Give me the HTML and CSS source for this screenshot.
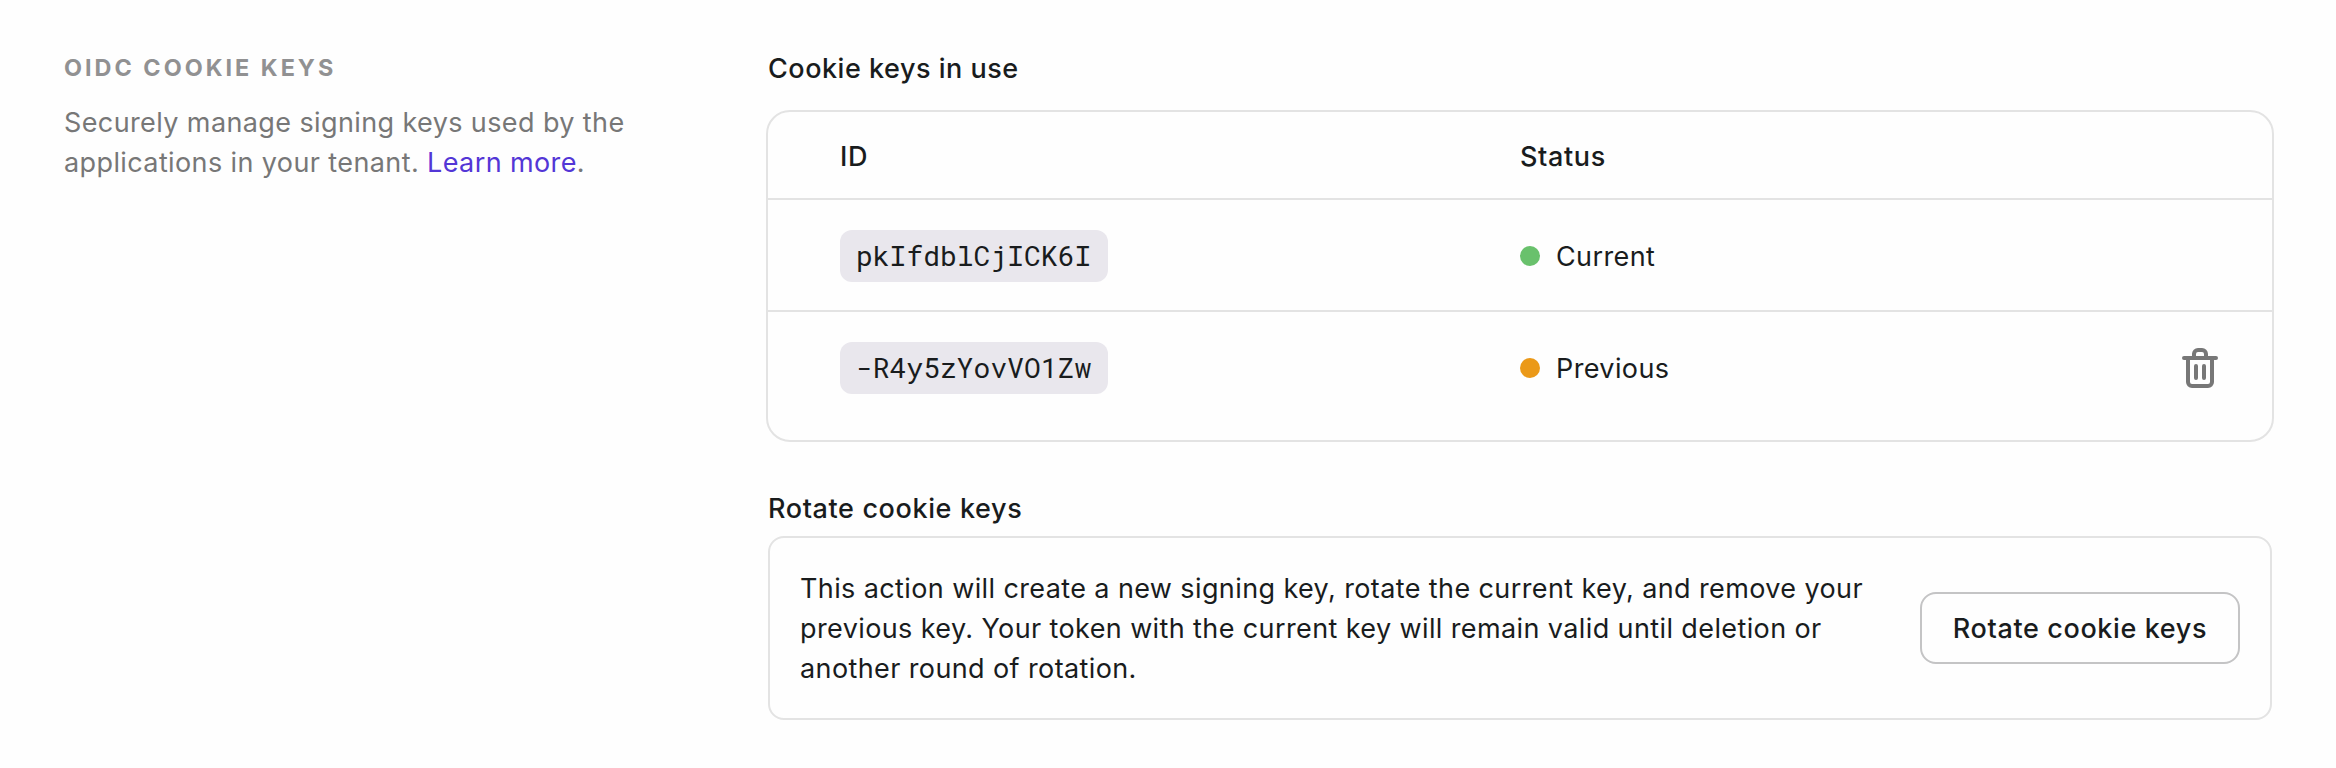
FILE: index.html
```html
<!DOCTYPE html>
<html lang="en">
<head>
<meta charset="utf-8">
<title>OIDC cookie keys</title>
<link rel="stylesheet" href="styles.css">
</head>
<body>
<main class="form-card">
  <section class="intro">
    <h2 class="intro-title">OIDC COOKIE KEYS</h2>
    <p class="intro-text">Securely manage signing keys used by the<br>applications in your tenant. <a class="link" href="#">Learn more</a>.</p>
  </section>
  <section class="fields">
    <h3 class="label label-use">Cookie keys in use</h3>
    <div class="table">
      <div class="row head"><div>ID</div><div>Status</div><div></div></div>
      <div class="row">
        <div><code class="chip">pkIfdblCjICK6I</code></div>
        <div class="status"><i class="dot current"></i><span class="status-text">Current</span></div>
        <div></div>
      </div>
      <div class="row">
        <div><code class="chip">-R4y5zYovVO1Zw</code></div>
        <div class="status"><i class="dot previous"></i><span class="status-text">Previous</span></div>
        <button class="delete" aria-label="Delete">
          <svg width="48" height="48" viewBox="0 0 48 48" fill="none" stroke="#777777" stroke-width="4" stroke-linecap="round" stroke-linejoin="round">
            <path d="M8 14H40M18 14V10a4 4 0 0 1 4-4h4a4 4 0 0 1 4 4v4M12 14V38a4 4 0 0 0 4 4H32a4 4 0 0 0 4-4V14M20 22V34M28 22V34"/>
          </svg>
        </button>
      </div>
    </div>
    <h3 class="label label-rotate">Rotate cookie keys</h3>
    <div class="rotate">
      <p class="rotate-text">This action will create a new signing key, rotate the current key, and remove your<br>previous key. Your token with the current key will remain valid until deletion or<br>another round of rotation.</p>
      <button class="button">Rotate cookie keys</button>
    </div>
  </section>
</main>
</body>
</html>
```
FILE: styles.css
```css
* {
  box-sizing: border-box;
}

body {
  margin: 0;
  background: #fefefe;
  color: #191c1d;
  font: 400 27px/40px Inter, "Liberation Sans", sans-serif;
  letter-spacing: 0.39px;
}

h2, h3, p {
  margin: 0;
}

button {
  font: inherit;
  letter-spacing: inherit;
  color: inherit;
  background: none;
  padding: 0;
}

.form-card {
  display: grid;
  grid-template-columns: 704px 1508px;
  padding: 48px 0 0 62px;
  height: 768px;
}

.intro {
  padding-left: 2px;
}

.intro-title {
  color: #919192;
  font-size: 23.4px;
  font-weight: 700;
  line-height: 40px;
  letter-spacing: 3px;
}

.intro-text {
  margin-top: 15px;
  color: #777777;
  white-space: nowrap;
}

.link {
  color: #5336d6;
  text-decoration: none;
}

.label {
  padding: 1px 0 0 2px;
  font-size: 27px;
  font-weight: 500;
  line-height: 40px;
  letter-spacing: 0.62px;
}

.label-use {
  letter-spacing: 0.52px;
}

.table {
  margin-top: 21px;
  height: 332px;
  border: 2px solid #e3e3e3;
  border-radius: 24px;
}

.row {
  display: grid;
  grid-template-columns: 680px 656px 48px;
  align-items: center;
  height: 112px;
  padding: 2px 0 0 72px;
}

.row + .row {
  border-top: 2px solid #e3e3e3;
}

.row.head {
  height: 86px;
  padding-top: 3px;
  font-weight: 500;
  letter-spacing: 0.62px;
}

.chip {
  display: block;
  width: 268px;
  height: 52px;
  padding-left: 16px;
  border-radius: 12px;
  background: #e9e7ed;
  font: 400 28px/52px "Roboto Mono", "DejaVu Sans Mono", monospace;
  letter-spacing: 0;
}

.status {
  display: flex;
  align-items: center;
  gap: 16px;
}

.status-text {
  padding-top: 2px;
}

.dot {
  width: 20px;
  height: 20px;
  border-radius: 50%;
}

.dot.current {
  background: #69c16c;
}

.dot.previous {
  background: #eb9918;
}

.delete {
  display: grid;
  width: 48px;
  height: 48px;
  border: 0;
}

.label-rotate {
  margin-top: 46px;
}

.rotate {
  display: flex;
  align-items: center;
  justify-content: space-between;
  height: 184px;
  margin: 7px 2px 0;
  padding: 0 30px;
  border: 2px solid #e3e3e3;
  border-radius: 16px;
}

.rotate-text {
  padding-top: 2px;
  white-space: nowrap;
}

.button {
  width: 320px;
  height: 72px;
  padding-top: 2px;
  border: 2px solid #c4c4c5;
  border-radius: 16px;
  font-weight: 500;
  letter-spacing: 0.62px;
}
```
